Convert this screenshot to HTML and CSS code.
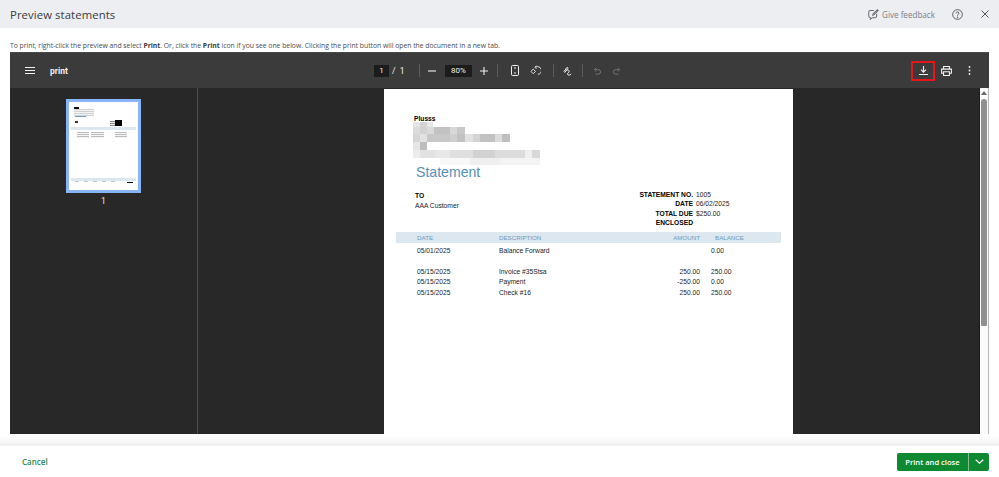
FILE: index.html
```html
<!DOCTYPE html>
<html lang="en">
<head>
<meta charset="utf-8">
<title>Preview statements</title>
<link rel="stylesheet" href="styles.css">
</head>
<body>
<header class="head">
  <h1 class="title">Preview statements</h1>
  <div class="head-actions">
    <span class="feedback">
      <svg width="11" height="11" viewBox="0 0 14 14" fill="none" stroke="#6b6c72" stroke-width="1.3"><path d="M7.500 2H3a2 2 0 0 0-2 2v5a2 2 0 0 0 2 2v2l2.500-2H9a2 2 0 0 0 2-2V6"/><path d="M6 8l.5-2L12 1l1 1-5.300 5.200z"/></svg>
      Give feedback
    </span>
    <svg class="ic-help" width="11" height="11" viewBox="0 0 13 13" fill="none" stroke="#55565c" stroke-width="1.100"><circle cx="6.500" cy="6.500" r="5.700"/><path d="M4.800 5.200a1.700 1.700 0 1 1 2.500 1.500c-.6.300-.8.600-.8 1.200"/><circle cx="6.500" cy="9.700" r=".4" fill="#55565c"/></svg>
    <svg class="ic-close" width="8" height="8" viewBox="0 0 8 8" stroke="#55565c" stroke-width="1"><path d="M.5.500l7 7M7.500.500l-7 7"/></svg>
  </div>
</header>

<p class="hint">To print, right-click the preview and select <b>Print</b>. Or, click the <b>Print</b> icon if you see one below. Clicking the print button will open the document in a new tab.</p>

<section class="viewer">
  <div class="toolbar">
    <div class="tb-left">
      <svg width="10" height="7" viewBox="0 0 10 7" stroke="#f1f1f1" stroke-width="1"><path d="M0 .5h10M0 3.500h10M0 6.500h10"/></svg>
      <span class="doc-name">print</span>
    </div>
    <div class="tb-center">
      <span class="box box-page">1</span>
      <span class="pages">/ &nbsp;1</span>
      <i class="sep sep-a"></i>
      <svg class="ic-minus" width="8" height="8" viewBox="0 0 8 8" stroke="#f1f1f1" stroke-width="1.100"><path d="M0 4h8"/></svg>
      <span class="box box-zoom">80%</span>
      <svg class="ic-plus" width="8" height="8" viewBox="0 0 8 8" stroke="#f1f1f1" stroke-width="1.100"><path d="M0 4h8M4 0v8"/></svg>
      <i class="sep sep-b"></i>
      <svg class="ic-fit" width="8" height="11" viewBox="0 0 8 11" fill="none" stroke="#f1f1f1" stroke-width="1"><rect x=".5" y=".5" width="7" height="10" rx="1"/><path d="M3 3h2M3 8h2"/></svg>
      <svg class="ic-rotate" width="11" height="11" viewBox="0 0 12 12" fill="none" stroke="#f1f1f1" stroke-width="1"><path d="M6 2.500a4.200 4.200 0 1 1 2.500 7.700"/><path d="M7 .8L5.400 2.500 7 4.200"/><path d="M3.500 4.500L1 7l2.500 2.500L6 7z"/></svg>
      <i class="sep sep-c"></i>
      <svg class="ic-ink" width="9" height="10" viewBox="0 0 11 12" fill="none" stroke="#f1f1f1" stroke-width="1.200"><path d="M1 7l3.500-5c1-1 2.200.2 1.200 1.300L2 8M4 5c2-1 4 .5 3.500 2S5 8.500 5.500 10s3 1.500 4.500-.5"/></svg>
      <i class="sep sep-d"></i>
      <svg class="ic-undo" width="8" height="8" viewBox="0 0 9 9" fill="none" stroke="#77787a" stroke-width="1.100"><path d="M2.500 3h3.500a2.500 2.500 0 0 1 0 5H3M3.500 1L1.500 3l2 2"/></svg>
      <svg class="ic-redo" width="8" height="8" viewBox="0 0 9 9" fill="none" stroke="#77787a" stroke-width="1.100"><path d="M6.500 3H3a2.500 2.500 0 0 0 0 5h3M5.500 1l2 2-2 2"/></svg>
    </div>
    <div class="tb-right">
      <span class="dl-box"><svg width="9" height="9" viewBox="0 0 10 10" fill="none" stroke="#f1f1f1" stroke-width="1.200"><path d="M5 0v6.500M2.200 4L5 6.800 7.800 4M0 9.400h10"/></svg></span>
      <svg class="ic-print" width="11" height="10" viewBox="0 0 12 11" fill="none" stroke="#f1f1f1" stroke-width="1.200"><path d="M2.800 3V.6h6.400V3M2.800 8H.6V3.400h10.800V8H9.200"/><path d="M2.800 6.400h6.400v4H2.800z"/></svg>
      <svg class="ic-more" width="3" height="9" viewBox="0 0 3 9" fill="#f1f1f1"><circle cx="1.500" cy="1" r=".9"/><circle cx="1.500" cy="4.500" r=".9"/><circle cx="1.500" cy="8" r=".9"/></svg>
    </div>
  </div>
  <div class="viewer-body">
    <aside class="thumbs">
      <div class="thumb">
        <div class="thumb-page">
          <span class="t-name"></span>
          <span class="t-lines"></span>
          <span class="t-title"></span>
          <span class="t-to"></span>
          <span class="t-facts"></span>
          <span class="t-block"></span>
          <span class="t-band"></span>
          <span class="t-rows"></span>
          <span class="t-rows t-rows-b"></span>
          <span class="t-rows t-rows-c"></span>
          <span class="t-foot"></span>
          <span class="t-foot-text"></span>
          <span class="t-mark"></span>
        </div>
      </div>
      <div class="thumb-num">1</div>
    </aside>
    <main class="stage">
      <article class="sheet">
        <div class="company">Plusss</div>
        <div class="blur">
          <span class="blur-top"></span>
          <span class="blur-a"></span>
          <span class="blur-b"></span>
          <span class="blur-c"></span>
          <span class="blur-d"></span>
          <span class="blur-e"></span>
        </div>
        <h2 class="st-title">Statement</h2>
        <div class="meta">
          <div class="to">
            <div class="lbl">TO</div>
            <div>AAA Customer</div>
          </div>
          <dl class="facts">
            <dt>STATEMENT NO.</dt><dd>1005</dd>
            <dt>DATE</dt><dd>06/02/2025</dd>
            <dt>TOTAL DUE</dt><dd>$250.00</dd>
            <dt>ENCLOSED</dt><dd></dd>
          </dl>
        </div>
        <div class="row band">
          <span class="c-date">DATE</span><span class="c-desc">DESCRIPTION</span><span class="c-amt">AMOUNT</span><span class="c-bal band-bal">BALANCE</span>
        </div>
        <div class="row first"><span class="c-date">05/01/2025</span><span class="c-desc">Balance Forward</span><span class="c-amt"></span><span class="c-bal">0.00</span></div>
        <div class="row gap"><span class="c-date">05/15/2025</span><span class="c-desc">Invoice #35Stsa</span><span class="c-amt">250.00</span><span class="c-bal">250.00</span></div>
        <div class="row"><span class="c-date">05/15/2025</span><span class="c-desc">Payment</span><span class="c-amt">-250.00</span><span class="c-bal">0.00</span></div>
        <div class="row"><span class="c-date">05/15/2025</span><span class="c-desc">Check #16</span><span class="c-amt">250.00</span><span class="c-bal">250.00</span></div>
      </article>
      <div class="scrollbar">
        <i class="arrow"></i>
        <i class="sb-thumb"></i>
      </div>
    </main>
  </div>
</section>

<footer class="foot">
  <a class="cancel">Cancel</a>
  <div class="split">
    <span class="split-main">Print and close</span>
    <span class="split-arrow"><svg width="9" height="5" viewBox="0 0 9 5" fill="none" stroke="#fff" stroke-width="1.200"><path d="M.7.7l3.800 3.500L8.300.7"/></svg></span>
  </div>
</footer>
</body>
</html>
```
FILE: styles.css
```css
* { box-sizing: border-box; }
html, body { margin: 0; padding: 0; }
body {
  width: 999px; height: 477px; overflow: hidden;
  background: #fff;
  font-family: "Open Sans", "Liberation Sans", sans-serif;
  display: flex; flex-direction: column;
}
.head {
  height: 28px; background: #eceef1;
  display: flex; align-items: center; justify-content: space-between;
  padding: 0 10px 0 10px;
}
.title { margin: 0; font-size: 11.300px; font-weight: 400; color: #393a3d; letter-spacing: .1px; }
.head-actions { display: flex; align-items: center; }
.feedback { display: flex; align-items: center; gap: 3px; font-size: 8.100px; color: #7d7e84; }
.ic-help { margin-left: 17px; }
.ic-close { margin-left: 18px; }
.hint { margin: 12px 0 1px 10px; height: 11px; font-size: 6.800px; line-height: 11px; color: #4a4b50; white-space: nowrap; }
.hint b { color: #393a3d; }
.viewer { margin: 0 0 0 10px; width: 979px; height: 382px; background: #282828; display: flex; flex-direction: column; }
.toolbar {
  height: 36px; background: #3b3b3b; position: relative;
  border-top: 1px solid #4a4a4a;
  display: flex; align-items: center; justify-content: space-between;
  color: #f1f1f1;
}
.tb-left { display: flex; align-items: center; padding-left: 15px; gap: 15px; }
.doc-name { font-size: 8.500px; font-weight: 700; font-family: Roboto, "Open Sans", sans-serif; }
.tb-center { position: absolute; left: 364px; top: 0; height: 100%; display: flex; align-items: center; font-family: Roboto, sans-serif; font-size: 8.500px; }
.box { height: 12px; background: #1c1c1c; line-height: 12px; text-align: center; display: block; font-size: 8px; }
.box-page { width: 15px; }
.pages { margin-left: 3px; width: 20px; white-space: nowrap; }
.sep { display: block; width: 1px; height: 13px; background: #5c5c5c; }
.sep-a { margin-left: 7px; }
.ic-minus { margin-left: 8px; }
.box-zoom { width: 27px; margin-left: 9px; }
.ic-plus { margin-left: 8px; }
.sep-b { margin-left: 9px; }
.ic-fit { margin-left: 13px; }
.ic-rotate { margin-left: 11px; }
.sep-c { margin-left: 12px; }
.ic-ink { margin-left: 9px; }
.sep-d { margin-left: 10px; }
.ic-undo { margin-left: 10px; }
.ic-redo { margin-left: 12px; }
.tb-right { display: flex; align-items: center; padding-right: 18px; }
.dl-box { width: 24px; height: 20px; border: 2px solid #e8141c; display: flex; align-items: center; justify-content: center; }
.ic-print { margin-left: 6px; }
.ic-more { margin-left: 16px; }
.viewer-body { flex: 1; display: flex; min-height: 0; }
.thumbs { width: 188px; border-right: 1px solid #4d4d4d; background: #282828; padding-top: 11px; }
.thumb { width: 75px; height: 94px; margin-left: 56px; background: #8ab4f8; padding: 3px; }
.thumb-page { display: block; height: 100%; background: #fff; position: relative; overflow: hidden; }
.thumb-page span { position: absolute; display: block; }
.t-name { left: 5px; top: 5px; width: 5px; height: 2px; background: #111; }
.t-lines { left: 5px; top: 7px; width: 20px; height: 7px; background: repeating-linear-gradient(#d0d0d0 0 1px, #f4f4f4 1px 2px); }
.t-title { left: 6px; top: 14px; width: 11px; height: 1px; background: #6aa0c8; }
.t-to { left: 6px; top: 19px; width: 3px; height: 2px; background: #333; }
.t-facts { left: 41px; top: 19px; width: 5px; height: 5px; background: repeating-linear-gradient(#888 0 1px, #eee 1px 2px); }
.t-block { left: 46px; top: 18px; width: 7px; height: 6px; background: #000; }
.t-band { left: 2px; top: 25px; width: 65px; height: 3px; background: #dde7ef; }
.t-rows { left: 8px; top: 30px; width: 12px; height: 6px; background: repeating-linear-gradient(#bdbdbd 0 1px, #f5f5f5 1px 2px); }
.t-rows-b { left: 22px; width: 13px; }
.t-rows-c { left: 46px; width: 12px; }
.t-foot { left: 2px; top: 76px; width: 65px; height: 3px; background: #dde7ef; }
.t-foot-text { left: 6px; top: 79px; width: 42px; height: 1px; background: repeating-linear-gradient(90deg, #c4c4c4 0 4px, #fff 4px 9px); }
.t-mark { left: 58px; top: 80px; width: 6px; height: 1px; background: #000; }
.thumb-num { width: 75px; margin: 3px 0 0 56px; text-align: center; font-size: 8.500px; font-family: Roboto, sans-serif; color: #e8e8e8; }
.stage { flex: 1; position: relative; min-width: 0; overflow: hidden; display: flex; }
.sheet {
  width: 409px; height: 346px; margin: 1px 0 0 186px; background: #fff; color: #222;
  font-family: "Liberation Sans", Arial, sans-serif; font-size: 6.700px;
  padding: 26px 12px 0 12px;
}
.company { font-weight: 700; color: #000; margin-left: 18px; line-height: 8px; }
.blur { position: relative; height: 42px; margin-top: -1px; }
.blur span { position: absolute; display: block; }
.blur-top { left: 17px; top: 0; width: 20px; height: 5px; background: linear-gradient(90deg, #e6e6e6 0 7px, #d4d4d4 7px 14px, #e8e8e8 14px); }
.blur-a { left: 17px; top: 5px; width: 52px; height: 7px; background: linear-gradient(90deg, #dcdcdc 0 7px, #d2d2d2 7px 14px, #dadada 14px 21px, #c2c2c2 21px 37px, #d8d8d8 37px 44px, #c8c8c8 44px); }
.blur-b { left: 17px; top: 12px; width: 97px; height: 8px; background: linear-gradient(90deg, #d6d6d6 0 7px, #e2e2e2 7px 14px, #c8c8c8 14px 37px, #cfcfcf 37px 44px, #c2c2c2 44px 52px, #e2e2e2 52px 60px, #d4d4d4 60px 67px, #c2c2c2 67px 82px, #dcdcdc 82px 89px, #bfbfbf 89px); }
.blur-c { left: 17px; top: 20px; width: 14px; height: 8px; background: linear-gradient(90deg, #e6e6e6 0 7px, #bdbdbd 7px); }
.blur-d { left: 17px; top: 28px; width: 127px; height: 8px; background: linear-gradient(90deg, #ececec 0 7px, #e2e2e2 7px 22px, #e8e8e8 22px 37px, #dfdfdf 37px 60px, #d2d2d2 60px 82px, #dcdcdc 82px 112px, #f0f0f0 112px 119px, #d8d8d8 119px); }
.blur-e { left: 44px; top: 36px; width: 100px; height: 7px; background: linear-gradient(90deg, #f8f8f8 0 30px, #efefef 30px 60px, #f3f3f3 60px); }
.st-title { margin: 0 0 0 20px; font-size: 14.100px; line-height: 17px; font-weight: 400; color: #5590b8; position: relative; }
.meta { display: flex; margin-top: 9px; position: relative; height: 42px; }
.to { margin-left: 19px; line-height: 9px; padding-top: 1px; }
.lbl { font-weight: 700; color: #000; margin-bottom: 1px; }
.facts {
  margin: 0; position: absolute; left: 200px; top: 0; width: 140px;
  display: grid; grid-template-columns: 97px 1fr; column-gap: 3px; grid-auto-rows: 9.300px; line-height: 9.300px;
}
.facts dt { font-weight: 700; color: #000; text-align: right; white-space: nowrap; }
.facts dd { margin: 0; }
.row { display: flex; height: 10.300px; line-height: 10.300px; white-space: nowrap; }
.band { background: #dce7ef; color: #6a9cc2; height: 11px; line-height: 11px; font-size: 6.200px; }
.first { margin-top: 3px; }
.gap { margin-top: 10.700px; }
.c-date { width: 82px; margin-left: 21px; }
.c-desc { width: 130px; }
.c-amt { width: 71px; text-align: right; }
.c-bal { margin-left: 11px; }
.band-bal { margin-left: 15px; }
.scrollbar { position: absolute; right: 0; top: 0; bottom: 0; width: 10px; background: #fbfbfb; border-left: 1px solid #1c1c1c; border-right: 1px solid #b5b5b5; display: block; }
.arrow { display: block; width: 0; margin: 3px 0 0 1px; border: 3px solid transparent; border-top: 0; border-bottom: 4px solid #6a6a6a; }
.sb-thumb { display: block; width: 6px; height: 227px; margin: 4px 0 0 1px; border-radius: 3px 3px 1px 1px; background: #8f8f8f; }
.foot {
  margin-top: 2px; flex: 1; padding: 10px 10px 0 22px;
  background: linear-gradient(#fff 0, #f5f5f5 7px, #ebebeb 9px, #fff 10px);
  display: flex; align-items: center; justify-content: space-between;
}
.cancel { font-size: 8px; font-weight: 600; color: #2a8a4c; }
.split { display: flex; height: 18px; border-radius: 2px; overflow: hidden; background: #108a32; color: #fff; font-weight: 600; font-size: 7.600px; }
.split-main { width: 71px; line-height: 18px; text-align: center; }
.split-arrow { width: 21px; border-left: 1px solid #7fbd92; display: flex; align-items: center; justify-content: center; }
```
